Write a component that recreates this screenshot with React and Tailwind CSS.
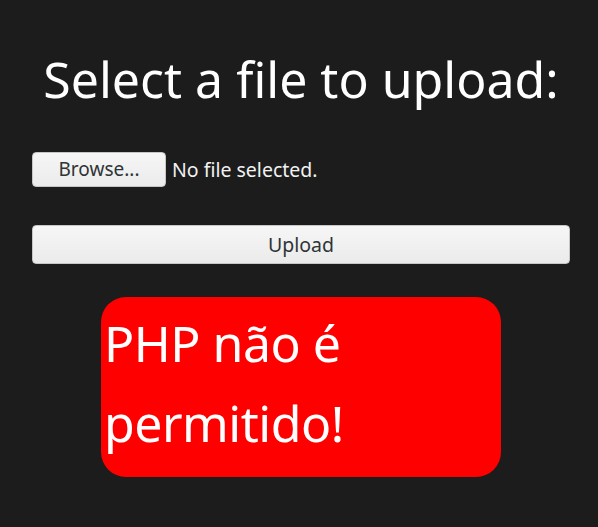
export default function App() {
  return (
    <div
      className="min-h-[527px] bg-[#1c1c1c] pl-8 pr-[28px] pt-[40px] text-white"
      style={{ fontFamily: "'Noto Sans', sans-serif" }}
    >
      <h1 className="text-center text-[50px] font-normal leading-[78px]">
        Select a file to upload:
      </h1>
      <div className="mt-[34px] flex items-center gap-[6px]">
        <button className="h-[35px] w-[134px] rounded-[4px] border border-[#c6c6c6] bg-gradient-to-b from-[#f6f6f6] to-[#ebebeb] text-[19px] text-[#2e3436]">
          Browse...
        </button>
        <span className="text-[19.5px] text-[#f2f2f2]">No file selected.</span>
      </div>
      <button className="mt-[38px] h-[39px] w-full rounded-[4px] border border-[#c6c6c6] bg-gradient-to-b from-[#f6f6f6] to-[#ebebeb] text-[19.5px] text-[#2e3436]">
        Upload
      </button>
      <div className="mx-auto mt-[33px] h-[180px] w-[400px] rounded-[25px] bg-[#ff0000] pl-[3px] pt-[6px] text-[50px] leading-[80px] tracking-[-0.5px] text-white">
        PHP não é permitido!
      </div>
    </div>
  );
}
